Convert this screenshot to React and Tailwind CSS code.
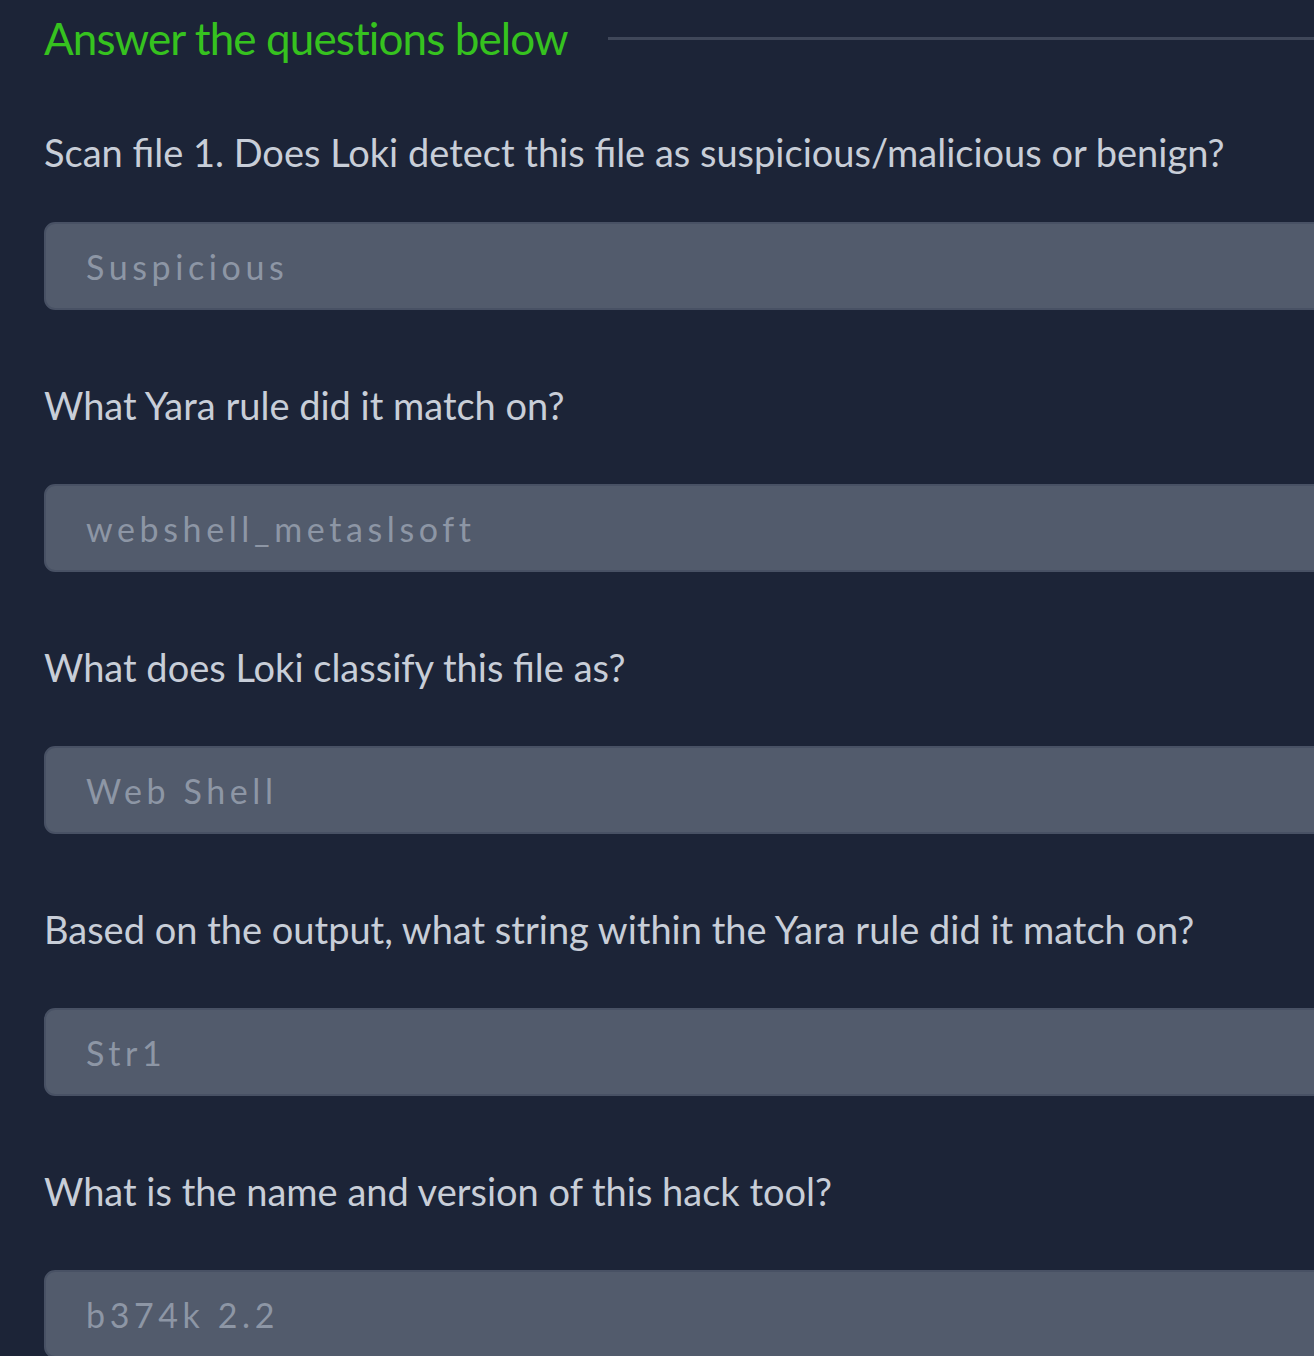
import React from "react";

const items = [
  ["Scan file 1. Does Loki detect this file as suspicious/malicious or benign?", "Suspicious"],
  ["What Yara rule did it match on?", "webshell_metaslsoft"],
  ["What does Loki classify this file as?", "Web Shell"],
  ["Based on the output, what string within the Yara rule did it match on?", "Str1"],
  ["What is the name and version of this hack tool?", "b374k 2.2"],
];

export default function App() {
  return (
    <div
      className="w-[1314px] h-[1356px] overflow-hidden bg-[#1c2437] pl-[44px]"
      style={{ fontFamily: "Lato, 'Noto Sans', sans-serif" }}
    >
      <div className="flex h-[76px] items-center">
        <h2 className="text-[44px] leading-none text-[#36c21f] whitespace-nowrap tracking-[-0.9px]">
          Answer the questions below
        </h2>
        <div className="ml-[40px] h-[3px] flex-1 bg-[#3f4759]" />
      </div>
      {items.map(([q, a], i) => (
        <div key={i} className={i === 0 ? "pt-[48px]" : "pt-[67px]"}>
          <div className="h-[56px] flex items-center text-[38px] leading-none text-[#c8ced8] whitespace-nowrap tracking-[0px]">
            {q}
          </div>
          <div className={i === 0 ? "mt-[42px]" : "mt-[51px]"}>
            <input
              readOnly
              placeholder={a}
              className="block w-[1320px] h-[88px] rounded-[11px] border-2 border-[#485164] bg-[#525b6c] pl-[40px] text-[34px] tracking-[4.6px] text-[#c8ced8] placeholder:text-[#8d96a5] outline-none"
              style={{ fontFamily: "Lato, 'Noto Sans', sans-serif" }}
            />
          </div>
        </div>
      ))}
    </div>
  );
}
